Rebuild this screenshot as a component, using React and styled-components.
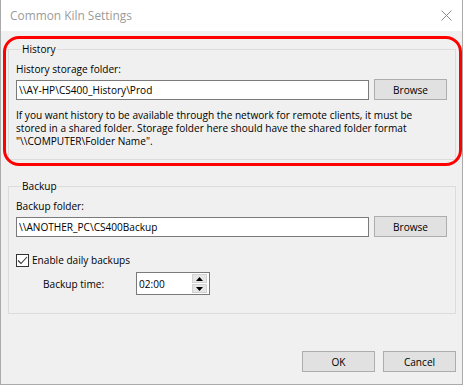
import React, { useState } from 'react';
import styled, { createGlobalStyle } from 'styled-components';

const GlobalStyle = createGlobalStyle`
  html, body {
    margin: 0;
    padding: 0;
    background: #ffffff;
  }
  * {
    box-sizing: border-box;
  }
`;

const uiFont = `"Open Sans", "Liberation Sans", Arial, sans-serif`;

const Window = styled.div`
  width: 463px;
  height: 385px;
  border: 1px solid #aaaaaa;
  border-top: none;
  display: flex;
  flex-direction: column;
  font-family: ${uiFont};
  font-size: 10.1px;
  color: #000;
  background: #f0f0f0;
`;

const TitleBar = styled.div`
  height: 31px;
  flex-shrink: 0;
  background: #ffffff;
  display: flex;
  align-items: center;
  justify-content: space-between;
  padding: 0 10px 1px 9px;
`;

const Title = styled.span`
  font-size: 11.9px;
  color: #9b9b9b;
`;

const CloseButton = styled.button`
  width: 12px;
  height: 12px;
  padding: 0;
  border: none;
  background: none;
  display: flex;
  align-items: center;
  justify-content: center;
`;

const Client = styled.div`
  flex: 1;
  display: flex;
  flex-direction: column;
  padding: 11px 6px 12px 7px;
`;

const Highlight = styled.div`
  position: relative;

  &::after {
    content: '';
    position: absolute;
    left: -5px;
    right: -6px;
    top: -6px;
    bottom: -6px;
    border: 3px solid #ff0000;
    border-radius: 16px;
    pointer-events: none;
  }
`;

const Group = styled.fieldset`
  margin: 0;
  margin-top: ${p => p.$gap || 0}px;
  padding: 6px 8px ${p => p.$bottom || 0}px 7px;
  border: 1px solid #dcdcdc;
  min-width: 0;
`;

const Legend = styled.legend`
  padding: 0 1px;
  margin-left: 5px;
  line-height: 14px;
`;

const FieldLabel = styled.div`
  line-height: 14px;
  margin-bottom: 3px;
`;

const PathRow = styled.div`
  display: flex;
  align-items: center;
  gap: 5px;
  height: 21px;
`;

const TextInput = styled.input`
  flex: 1;
  height: 20px;
  border: 1px solid #7a7a7a;
  background: #fff;
  padding: 0 2px;
  font-family: ${uiFont};
  font-size: 10.1px;
  color: #000;
  outline: none;
`;

const Button = styled.button`
  width: ${p => p.$width || 73}px;
  height: 21px;
  border: 1px solid #adadad;
  background: #e1e1e1;
  font-family: ${uiFont};
  font-size: 10.1px;
  color: #000;
  padding: 0;
  flex-shrink: 0;
`;

const Note = styled.p`
  margin: 9px 0 0;
  max-width: 418px;
  line-height: 13px;
`;

const CheckRow = styled.label`
  display: flex;
  align-items: center;
  gap: 3px;
  margin-top: 16px;
  line-height: 14px;
`;

const CheckBox = styled.span`
  width: 13px;
  height: 13px;
  border: 1px solid #333333;
  background: #fff;
  display: flex;
  align-items: center;
  justify-content: center;
`;

const TimeRow = styled.div`
  display: flex;
  align-items: center;
  margin-top: 5px;
  padding-left: 27px;
`;

const TimeLabel = styled.span`
  width: 93px;
`;

const SpinBox = styled.div`
  width: 74px;
  height: 23px;
  border: 1px solid #7a7a7a;
  background: #fff;
  display: flex;
  align-items: center;
  justify-content: space-between;
  padding: 0 2px 0 2px;
`;

const SpinButtons = styled.div`
  display: flex;
  flex-direction: column;
  gap: 1px;
`;

const SpinButton = styled.div`
  width: 15px;
  height: 9px;
  background: #e6e6e6;
  border: 1px solid #d2d2d2;
  display: flex;
  align-items: center;
  justify-content: center;
`;

const Footer = styled.div`
  margin-top: auto;
  display: flex;
  justify-content: flex-end;
  gap: 8px;
`;

const Arrow = ({ up }) => (
  <svg width="7" height="4" viewBox="0 0 7 4">
    <path d={up ? 'M0 4 L3.5 0 L7 4 Z' : 'M0 0 L3.5 4 L7 0 Z'} fill="#000" />
  </svg>
);

export default function App() {
  const [historyPath, setHistoryPath] = useState('\\\\AY-HP\\CS400_History\\Prod');
  const [backupPath, setBackupPath] = useState('\\\\ANOTHER_PC\\CS400Backup');
  const [daily, setDaily] = useState(true);

  return (
    <>
      <GlobalStyle />
      <Window>
        <TitleBar>
          <Title>Common Kiln Settings</Title>
          <CloseButton aria-label="Close">
            <svg width="11" height="11" viewBox="0 0 11 11">
              <path d="M0.5 0.5 L10.5 10.5 M10.5 0.5 L0.5 10.5" stroke="#8a8a8a" strokeWidth="1" />
            </svg>
          </CloseButton>
        </TitleBar>
        <Client>
          <Highlight>
            <Group $bottom={11}>
              <Legend>History</Legend>
              <FieldLabel>History storage folder:</FieldLabel>
              <PathRow>
                <TextInput value={historyPath} onChange={e => setHistoryPath(e.target.value)} />
                <Button>Browse</Button>
              </PathRow>
              <Note>
                If you want history to be available through the network for remote clients, it must be
                stored in a shared folder. Storage folder here should have the shared folder format
                "\\COMPUTER\Folder Name".
              </Note>
            </Group>
          </Highlight>
          <Group $gap={19} $bottom={18}>
            <Legend>Backup</Legend>
            <FieldLabel>Backup folder:</FieldLabel>
            <PathRow>
              <TextInput value={backupPath} onChange={e => setBackupPath(e.target.value)} />
              <Button>Browse</Button>
            </PathRow>
            <CheckRow onClick={() => setDaily(!daily)}>
              <CheckBox>
                {daily && (
                  <svg width="11" height="9" viewBox="0 0 11 9">
                    <path d="M1 4.5 L4 7.5 L10 1" stroke="#333" strokeWidth="1.1" fill="none" />
                  </svg>
                )}
              </CheckBox>
              Enable daily backups
            </CheckRow>
            <TimeRow>
              <TimeLabel>Backup time:</TimeLabel>
              <SpinBox>
                <span>02:00</span>
                <SpinButtons>
                  <SpinButton><Arrow up /></SpinButton>
                  <SpinButton><Arrow /></SpinButton>
                </SpinButtons>
              </SpinBox>
            </TimeRow>
          </Group>
          <Footer>
            <Button>OK</Button>
            <Button>Cancel</Button>
          </Footer>
        </Client>
      </Window>
    </>
  );
}
